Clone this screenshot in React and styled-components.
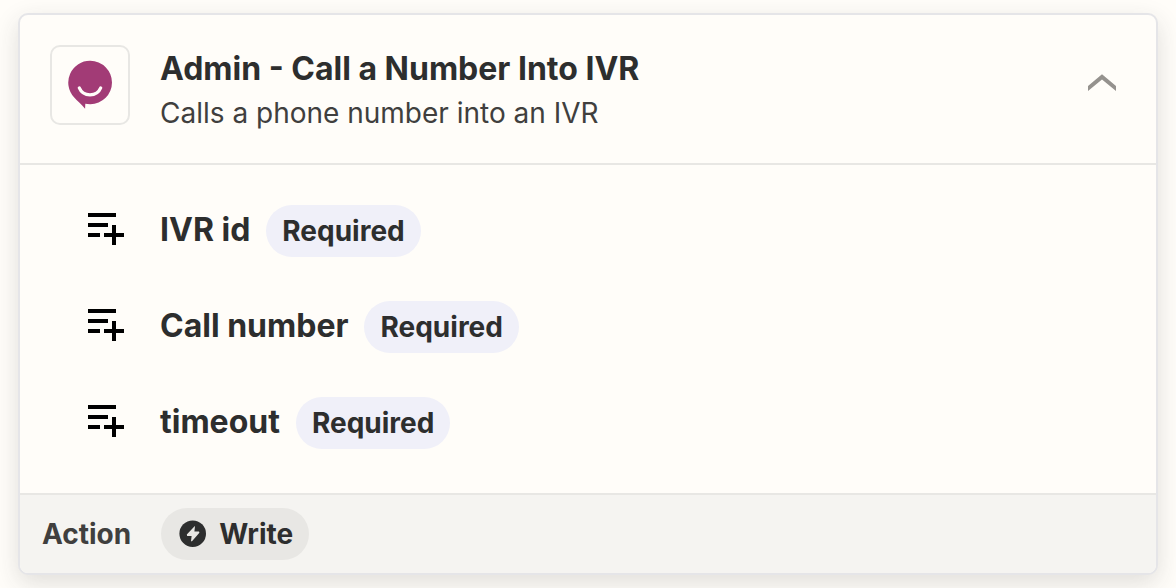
import * as React from 'react';
import styled, { createGlobalStyle } from 'styled-components';

const colors = {
  page: '#fffdf9',
  border: '#e8e7e4',
  outline: '#e5e5e8',
  heading: '#2d2e2e',
  text: '#403f3e',
  muted: '#95928e',
  required: '#f0f0f9',
  footer: '#f5f4f1',
  tag: '#e8e7e4',
  brand: '#a23b76',
};

const GlobalStyle = createGlobalStyle`
  *, *::before, *::after {
    box-sizing: border-box;
  }
  body {
    margin: 0;
    background: ${colors.page};
    color: ${colors.heading};
    font-family: Inter, "Liberation Sans", sans-serif;
  }
`;

const Page = styled.main`
  padding: 13px 18px;
`;

const Card = styled.article`
  border: 2px solid ${colors.outline};
  border-radius: 10px;
  background: ${colors.page};
  box-shadow: 0 8px 24px rgba(45, 46, 46, 0.15);
  overflow: hidden;
`;

const CardHeader = styled.header`
  display: flex;
  align-items: flex-start;
  gap: 30px;
  padding: 30px 38px 30px 30px;
`;

const LogoFrame = styled.div`
  display: flex;
  flex: none;
  align-items: center;
  justify-content: center;
  width: 80px;
  height: 80px;
  border: 2px solid ${colors.border};
  border-radius: 10px;
`;

const Heading = styled.div`
  flex: 1;
  min-width: 0;
`;

const Title = styled.h2`
  margin: 0;
  font-size: 32px;
  font-weight: 700;
  line-height: 48px;
`;

const Description = styled.p`
  margin: 0;
  color: ${colors.text};
  font-size: 28px;
  line-height: 40px;
`;

const ToggleButton = styled.button`
  display: flex;
  align-items: center;
  height: 80px;
  padding: 0;
  border: none;
  background: transparent;
  color: ${colors.muted};
  cursor: pointer;
  svg {
    transform: ${props => (props.$open ? 'none' : 'rotate(180deg)')};
  }
`;

const FieldList = styled.ul`
  display: flex;
  flex-direction: column;
  gap: 44px;
  margin: 0;
  padding: 40px 30px 44px 68px;
  border-top: 2px solid ${colors.border};
  list-style: none;
`;

const Field = styled.li`
  display: flex;
  align-items: center;
  gap: 36px;
`;

const FieldText = styled.div`
  display: flex;
  align-items: baseline;
  gap: 16px;
`;

const FieldName = styled.span`
  font-size: 32px;
  font-weight: 700;
  line-height: 48px;
`;

const Pill = styled.span`
  display: inline-flex;
  align-items: center;
  gap: 12px;
  height: 52px;
  padding: 0 16px;
  border-radius: 26px;
  background: ${props => (props.$required ? colors.required : colors.tag)};
  font-size: 28px;
  font-weight: 700;
`;

const CardFooter = styled.footer`
  display: flex;
  align-items: center;
  gap: 30px;
  padding: 13px 22px;
  border-top: 2px solid ${colors.border};
  background: ${colors.footer};
`;

const FooterLabel = styled.span`
  color: ${colors.text};
  font-size: 28px;
  font-weight: 700;
`;

const AppLogo = () => (
  <svg width="48" height="52" viewBox="0 0 48 52" aria-hidden="true">
    <path
      fill={colors.brand}
      d="M24.3 1.8a21.7 21.7 0 0 1 0 43.4c-1.9 0-3.6-.1-5-.4l-.2 4.9C16 45.5 11 42 8 38.2A21.7 21.7 0 0 1 24.3 1.8z"
    />
    <path
      d="M13.3 28.9c3.8 9.2 17.6 9.2 21.4 0"
      fill="none"
      stroke={colors.page}
      strokeWidth="3.2"
      strokeLinecap="round"
    />
  </svg>
);

const ChevronUp = () => (
  <svg width="32" height="22" viewBox="0 0 32 22" aria-hidden="true">
    <path fill="currentColor" d="M16 .2l14 11.8v5L16 5.6 2 17v-5z" />
  </svg>
);

const FieldIcon = () => (
  <svg width="36" height="36" viewBox="0 0 36 36" aria-hidden="true">
    <path d="M0 0h28v4H0zM0 10h20v4H0zM0 20h12v4H0zM24 12h4v8h8v4h-8v8h-4v-8h-8v-4h8z" />
  </svg>
);

const BoltIcon = () => (
  <svg width="30" height="30" viewBox="0 0 30 30" aria-hidden="true">
    <circle cx="15.7" cy="14.7" r="13.3" fill={colors.heading} />
    <path
      fill={colors.tag}
      d="M17.6 7.2L9.8 15.6l.4 1.3h4.4l-.6 5.4h1l7.4-8.6-.4-1.3h-4.6l.6-5.2z"
    />
  </svg>
);

const fields = ['IVR id', 'Call number', 'timeout'];

export default function App() {
  const [open, setOpen] = React.useState(true);

  return (
    <>
      <GlobalStyle />
      <Page>
        <Card>
          <CardHeader>
            <LogoFrame>
              <AppLogo />
            </LogoFrame>
            <Heading>
              <Title>Admin - Call a Number Into IVR</Title>
              <Description>Calls a phone number into an IVR</Description>
            </Heading>
            <ToggleButton
              type="button"
              aria-label="Toggle fields"
              aria-expanded={open}
              $open={open}
              onClick={() => setOpen(!open)}
            >
              <ChevronUp />
            </ToggleButton>
          </CardHeader>
          {open && (
            <FieldList>
              {fields.map(name => (
                <Field key={name}>
                  <FieldIcon />
                  <FieldText>
                    <FieldName>{name}</FieldName>
                    <Pill $required>Required</Pill>
                  </FieldText>
                </Field>
              ))}
            </FieldList>
          )}
          <CardFooter>
            <FooterLabel>Action</FooterLabel>
            <Pill>
              <BoltIcon />
              Write
            </Pill>
          </CardFooter>
        </Card>
      </Page>
    </>
  );
}
